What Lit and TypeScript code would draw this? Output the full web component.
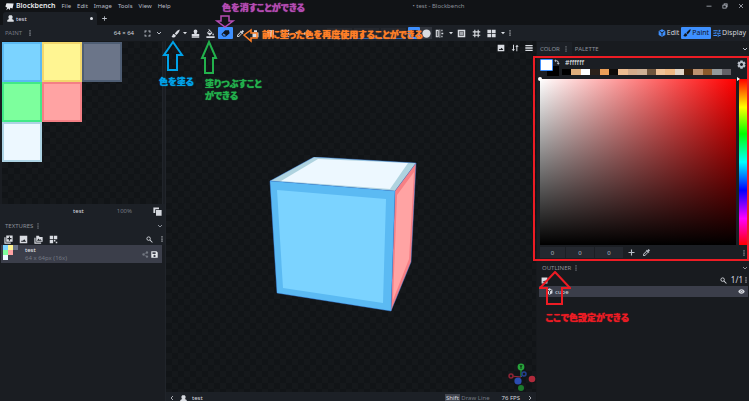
import { LitElement, html, svg, css } from "lit";
import { customElement, property } from "lit/decorators.js";
import { classMap } from "lit/directives/class-map.js";

const ICONS: Record<string, unknown> = {
  logo: svg`<path d="M4 3 23 4 20 17 14 15 13 21 9 17 3 22 6 15 1 12Z"/>`,
  user: svg`<path d="M8 1h8l3 3v7l-3 3H8l-3-3V4zM1 17l6-3h10l6 3v6H1z"/>`,
  plus: svg`<path d="M10.500 4h3v6.500H20v3h-6.500V20h-3v-6.500H4v-3h6.500z"/>`,
  frame: svg`<path d="M2 2h7v3H5v4H2zM15 2h7v7h-3V5h-4zM2 15h3v4h4v3H2zM19 15h3v7h-7v-3h4z"/>`,
  down: svg`<path d="m4 8 8 8 8-8" fill="none" stroke="currentColor" stroke-width="4"/>`,
  left: svg`<path d="m16 4-8 8 8 8" fill="none" stroke="currentColor" stroke-width="3"/>`,
  right: svg`<path d="m8 4 8 8-8 8" fill="none" stroke="currentColor" stroke-width="3"/>`,
  caret: svg`<path d="M4 8h16l-8 9z"/>`,
  dots: svg`<path d="M10 1h4v5h-4zM10 9.500h4v5h-4zM10 18h4v5h-4z"/>`,
  brush: svg`<path d="M23 1c-3 0-10 6-13 11l4 4C19 12 24 4 23 1zM8 13c-5 0-3 6-7 7 3 4 11 3 12-3z"/>`,
  stamp: svg`<path d="M7 6a5 5 0 1 1 10 0c0 3-2 4-2 7h7v6H2v-6h7c0-3-2-4-2-7zM2 20h20v3H2z"/>`,
  bucket: svg`<path d="M16.600 9 7.600 0 6.200 1.400l2.400 2.400-5.200 5.200c-.6.6-.6 1.500 0 2.100l5.500 5.500c.6.6 1.500.6 2.100 0l5.500-5.500c.6-.6.6-1.500 0-2.100zM5.200 10 10 5.200 14.800 10zM19 11.500s-2 2.200-2 3.500a2 2 0 0 0 4 0c0-1.300-2-3.500-2-3.500zM1 19h22v5H1z"/>`,
  eraser: svg`<path d="M11 3h10l2 8-10 9H6l-5-6zm-5 9-2 2 3 4h4l2-2z" fill-rule="evenodd"/>`,
  picker: svg`<path d="m20.700 5.600-2.300-2.300a1 1 0 0 0-1.400 0l-3.100 3.100L12 4.500l-1.500 1.500 1.500 1.400L3 16.300V21h4.800l8.900-9 1.400 1.500 1.500-1.500-2-1.900 3.100-3.100c.4-.4.400-1 0-1.400zM7 19l-2-2 8-8 2 2z"/>`,
  paste: svg`<path d="M4 9h16v13H4zM8 3h8v5H8z"/>`,
  square: svg`<path d="M3 3h18v18H3z"/>`,
  rounded: svg`<path d="M2 2h20v20H2zm4 4v12h12V6z" fill-rule="evenodd"/><path d="M7 7h10v10H7z" opacity=".7"/>`,
  circle: svg`<circle cx="12" cy="12" r="11"/>`,
  dashed: svg`<path d="M2 2h5v3H2zM10 2h5v3h-5zM18 2h4v3h-4zM2 9h3v6H2zM19 9h3v6h-3zM2 19h5v3H2zM10 19h5v3h-5zM18 19h4v3h-4z"/>`,
  move: svg`<path d="m12 1 5 6h-3v3h4V7l5 5-5 5v-3h-4v4h3l-5 5-5-5h3v-4H6v3l-5-5 5-5v3h4V7H7z"/>`,
  mirror: svg`<path d="M2 2h8v20H2zm3 3v14h2V5zM12 1h2v22h-2zM17 2h3v4h-3zM17 10h5v4h-5zM17 18h3v4h-3z" fill-rule="evenodd"/>`,
  hash: svg`<path d="M6 2h3v4h6V2h3v4h4v3h-4v6h4v3h-4v4h-3v-4H9v4H6v-4H2v-3h4V9H2V6h4zm3 7v6h6V9z" fill-rule="evenodd"/>`,
  grid: svg`<path d="M1 2h10v9H1zM13 2h10v9H13zM1 13h10v9H1zM13 13h10v9H13z"/>`,
  image: svg`<path d="M2 2h20v20H2zm3 16h14l-5-7-4 5-2-2z" fill-rule="evenodd"/>`,
  sort: svg`<path d="M6 2h3v14h3l-5 6-5-6h4zM16 22V8h-3l5-6 5 6h-4v14z"/>`,
  menu: svg`<path d="M1 3h22v4H1zM1 10h22v4H1zM1 17h22v4H1z"/>`,
  cubeIcon: svg`<path d="m12 1 10 5v12l-10 5-10-5V6z"/><path d="m5 7 7 4 7-4M12 11v9" fill="none" stroke="#1c2026" stroke-width="3"/>`,
  sliders: svg`<path d="M1 4h13v3H1zM17 2h3v7h-3zM20 4h3v3h-3zM1 11h5v3H1zM7 9h3v7H7zM12 11h11v3H12zM1 18h11v3H1zM14 16h3v7h-3zM18 18h5v3h-5z"/>`,
  layers: svg`<path d="M1 1h15v5H6v10H1zM8 8h15v15H8z"/>`,
  addBox: svg`<path d="M1 6h3v14h14v3H1zM6 1h17v17H6zm7 3v4H9v3h4v4h3v-4h4V8h-4V4z" fill-rule="evenodd"/>`,
  addFolder: svg`<path d="M1 7h3v13h15v3H1zM6 2h7l2 3h8v13H6z"/><path d="m8 15 4-6 3 4 2-2 4 4z" fill="#1c2026"/>`,
  brick: svg`<path d="M2 2h9v9H2zM13 2h9v9h-9zM2 13h9v9H2zM13 13h4v4h-4zM18 18h4v4h-4z"/>`,
  search: svg`<circle cx="9" cy="9" r="6" fill="none" stroke="currentColor" stroke-width="3"/><path d="m13 15 2-2 8 8-2 2z"/>`,
  share: svg`<circle cx="5" cy="12" r="4"/><circle cx="17" cy="5" r="4"/><circle cx="17" cy="19" r="4"/><path d="M5 12 17 5M5 12l12 7" stroke="currentColor" stroke-width="2"/>`,
  save: svg`<path d="M1 1h18l4 4v18H1zm4 3v6h11V4zm7 9a4 4 0 1 0 .1 0z" fill-rule="evenodd"/>`,
  gear: svg`<path d="m9 1h6l1 4 4-1 3 5-3 3 3 3-3 5-4-1-1 4H9l-1-4-4 1-3-5 3-3-3-3 3-5 4 1zm3 7a4 4 0 1 0 .1 0z" fill-rule="evenodd"/>`,
  swap: svg`<path d="M8 1v4c8 0 11 4 11 11h4l-6 7-6-7h4c0-5-2-7-7-7v4L1 7z"/>`,
  eye: svg`<path d="M12 4c6 0 10 5 11 8-1 3-5 8-11 8S2 15 1 12c1-3 5-8 11-8zm0 4a4 4 0 1 0 .1 0z" fill-rule="evenodd"/><circle cx="12" cy="12" r="3"/>`,
  min: svg`<path d="M2 11h20v3H2z"/>`,
  restore: svg`<path d="M7 2h15v15h-4v5H2V7h5zm3 3v2h8v7h1V5zM5 10v9h10v-9z" fill-rule="evenodd"/>`,
  close: svg`<path d="m4 4 16 16M20 4 4 20" stroke="currentColor" stroke-width="3"/>`,
};

@customElement("bb-icon")
class BbIcon extends LitElement {
  static styles = css`
    :host { display: inline-flex; width: 9px; height: 9px; flex: none; }
    svg { width: 100%; height: 100%; fill: currentColor; display: block; }
  `;
  @property() name = "";
  render() {
    return html`<svg viewBox="0 0 24 24" aria-hidden="true">${ICONS[this.name]}</svg>`;
  }
}

const MENUS = ["File", "Edit", "Image", "Tools", "View", "Help"];
const TILES = ["sky", "yellow", "slate", "green", "pink", "", "white"];
const SWATCHES = ["#000", "#dfae7c", "#fff", "#2a211b", "#ec9f58", "#0d0b09", "#eebd91", "#d4ac8b",
  "#cfb195", "#70563d", "#f0c398", "#efb983", "#e2d5c6", "#3b220c", "#bd9370", "#8b5a2b", "#93999b", "#626166"];

@customElement("app-root")
class AppRoot extends LitElement {
  static styles = css`
    * { box-sizing: border-box; }
    :host {
      display: grid; grid-template-rows: 12px 13px 16px minmax(0, 1fr); min-height: 100vh;
      position: relative; overflow: hidden; background: #111316; color: #b9bec7;
      font-family: "Noto Sans", "Noto Sans CJK JP", sans-serif; font-size: 6px; line-height: 8px;
    }
    button, input { font: inherit; color: inherit; background: none; border: 0; padding: 0; margin: 0; }
    button { display: inline-flex; align-items: center; justify-content: center; flex: none; }
    h2 { font: inherit; margin: 0; }
    .grow { flex: 1; }
    .small { width: 7px; height: 7px; }
    .tiny { width: 6px; height: 6px; }
    .muted { color: #747983; }

    .menubar { display: grid; grid-template-columns: 1fr auto 1fr; align-items: center; padding: 0 5px; }
    .menus { display: flex; align-items: center; gap: 6px; }
    .brand { display: flex; align-items: center; gap: 2px; color: #e8eaee; font-size: 7px; font-weight: 600; }
    .wintitle { padding-left: 128px; color: #8b9099; }
    .window { display: flex; justify-content: flex-end; gap: 10px; }

    .tabs { display: flex; align-items: stretch; padding-left: 3px; gap: 4px; }
    .tab { display: flex; align-items: center; gap: 2px; width: 94px; padding: 0 4px; background: #1c2026; border-radius: 3px 3px 0 0; color: #dcdfe4; }
    .dot { width: 3px; height: 3px; border-radius: 2px; background: #dcdfe4; }

    .columns { display: grid; grid-template-columns: 165px minmax(0, 1fr) 213px; }
    .toolbar { background: #1c2026; }
    .bar { display: flex; align-items: center; min-width: 0; }
    .sizebar { padding: 0 3px 0 5px; gap: 5px; }
    .res { color: #d5d8de; }
    .tools { padding-left: 4px; }
    .tool { width: 15px; height: 12px; color: #d9dce2; }
    .tool.drop { width: 7px; }
    .tool.on { background: #3e90ff; color: #10151d; border-radius: 1px; }
    .tool.side { background: #30343c; width: 12px; }
    .tool.box { width: 12px; }
    .sliders { display: flex; gap: 2px; margin: 0 2px 0 5px; }
    .slider { width: 25px; height: 11px; background: #24282f; border-bottom: 1px solid #2c62a8; text-align: center; }
    .modes { justify-content: flex-end; padding-right: 2px; gap: 1px; font-size: 7px; }
    .mode { height: 12px; gap: 1px; padding: 0 1px; color: #d2d5db; }
    .mode bb-icon { color: #3e90ff; width: 8px; height: 8px; }
    .mode.on { background: #3e90ff; color: #10151d; border-radius: 1px; padding: 0 2px; }
    .mode.on bb-icon { color: #10151d; }

    .checker { background: repeating-conic-gradient(#111417 0 25%, #15181b 0 50%) 0 0 / 12px 12px; }
    .side { background: #1a1d22; min-width: 0; display: flex; flex-direction: column; }
    .uv { height: 163px; margin: 0 2px; border-right: 1px solid #20242a; border-top: 1px solid #15181b; display: grid; grid-template-columns: repeat(3, 40px); grid-auto-rows: 40px; align-content: start; }
    .tile { border: 2px solid; }
    .sky { background: #7bd3ff; border-color: #5bbaf3; }
    .yellow { background: #fff592; border-color: #f2d76c; }
    .slate { background: #6b7589; border-color: #4e5d73; }
    .green { background: #7dff9d; border-color: #42e987; }
    .pink { background: #ffa3a3; border-color: #f47f85; }
    .white { background: #edf8ff; border-color: #add3e4; }
    .blank { border: 0; }
    .uvfoot { display: grid; grid-template-columns: 1fr auto 1fr; height: 14px; align-items: center; background: #1c2026; padding: 0 3px 0 1px; color: #d5d8de; }
    .uvfoot .zoom { display: flex; justify-content: flex-end; align-items: center; gap: 21px; padding-left: 33px; }
    .uvname { grid-column: 2; }
    .head { display: flex; align-items: center; height: 15px; padding: 0 2px 0 5px; gap: 2px; color: #8b9099; background: #1c2026; }
    .strip { display: flex; align-items: center; gap: 6px; height: 12px; padding: 0 0 0 4px; background: #1c2026; color: #d9dce2; }
    .tex { display: flex; align-items: center; height: 18px; margin: 0 3px 0 1px; padding: 0 4px 0 2px; background: #3b3e4a; gap: 2px; color: #e8eaee; }
    .thumb { display: grid; grid-template-columns: repeat(3, 5px); grid-auto-rows: 5px; width: 20px; align-self: start; }
    .thumb .tile { border: 0; }
    .texname { display: flex; flex-direction: column; line-height: 8px; }

    .view { position: relative; display: flex; flex-direction: column; border-left: 1px solid #20242a; min-width: 0; }
    .stage { position: relative; flex: 1; }
    .viewtools { display: flex; justify-content: flex-end; gap: 6px; padding: 3px 3px; color: #d9dce2; }
    .viewtools bb-icon { width: 8px; height: 8px; }
    .cube { position: absolute; left: 27%; top: 33%; width: 152px; height: 157px; }
    .gizmo { position: absolute; right: 0; bottom: 0; width: 30px; height: 30px; }
    .status { display: flex; align-items: center; height: 9px; gap: 5px; padding: 3px 3px 0; background: #1c2026; overflow: hidden; color: #d5d8de; }
    .status .who { display: flex; gap: 5px; align-items: center; }
    .key { background: #424650; padding: 0 1px; }
    .fps { margin-left: 7px; margin-right: 2px; }

    .right { background: #181b1f; border-left: 1px solid #16191d; position: relative; }
    .ptabs { display: flex; height: 15px; align-items: center; padding-right: 1px; background: #181b1f; }
    .ptab { height: 13px; padding: 0 3px; gap: 3px; color: #8b9099; background: #1c2026; }
    .ptab.off { background: none; }
    .picker { position: relative; background: #1b1e23; padding: 3px 0 1px 3px; height: 205px; display: flex; flex-direction: column; }
    .callout { position: absolute; top: 0; bottom: 0; left: -4px; right: 0; border: 2px solid #ed1c24; pointer-events: none; }
    .top { display: flex; gap: 3px; height: 20px; }
    .current { position: relative; width: 19px; }
    .back { position: absolute; left: 7px; top: 7px; width: 12px; height: 10px; background: #000; }
    .front { position: absolute; left: 0; top: 0; width: 13px; height: 12px; background: #fff; border: 1px solid #3e90ff; border-radius: 1px; }
    .swap { position: absolute; left: 14px; top: 0; width: 6px; height: 6px; }
    .history { flex: 1; display: flex; flex-direction: column; min-width: 0; gap: 2px; }
    .hex { width: 80px; height: 8px; padding-left: 3px; color: #e8eaee; font-size: 7px; }
    .swatches { display: flex; height: 6px; }
    .swatch { flex: 1; }
    .settings { width: 15px; height: 10px; }
    .area { display: flex; height: 166px; gap: 3px; }
    .field { position: relative; flex: 1; background: linear-gradient(to top, #000, transparent), linear-gradient(to right, #fff, #f00); }
    .knob { position: absolute; left: -2px; top: -2px; width: 4px; height: 4px; border-radius: 2px; background: #fff; }
    .huewrap { position: relative; width: 9px; margin-right: 1px; display: flex; }
    .hue { appearance: none; writing-mode: vertical-lr; width: 9px; height: 100%; background: linear-gradient(#f00, #ff0 17%, #0f0 33%, #0ff 50%, #00f 67%, #f0f 84%, #f00); }
    .hue::-webkit-slider-thumb { appearance: none; width: 9px; height: 1px; background: transparent; }
    .mark { position: absolute; left: -2px; top: -2px; border: 2px solid transparent; border-left: 3px solid #fff; }
    .mark.r { left: auto; right: -2px; border-left: 2px solid transparent; border-right: 3px solid #fff; }
    .values { display: flex; align-items: center; gap: 1px; height: 15px; padding-right: 2px; }
    .num { width: 28px; height: 11px; background: #24282f; text-align: center; color: #aeb8c5; }
    .num:first-child { width: 25px; }
    .values button { width: 14px; }
    .outhead { height: 13px; padding-right: 1px; background: #181b1f; }
    .outtools { height: 12px; gap: 4px; background: #181b1f; }
    .count { font-size: 8px; margin-right: -4px; }
    .node { display: flex; align-items: center; gap: 2px; height: 11px; margin: 0 1px 0 2px; padding: 0 3px 0 7px; background: #3b3e4a; color: #d5d8de; }

    .arrows { position: absolute; left: 0; top: 0; width: 280px; height: 110px; fill: none; stroke-width: 2; pointer-events: none; }
    .redarrow { position: absolute; right: 178px; top: 271px; width: 32px; height: 34px; fill: none; stroke: #ed1c24; stroke-width: 2; pointer-events: none; }
    .note { position: absolute; margin: 0; font: 900 9px/12px "Noto Sans CJK JP", sans-serif; font-feature-settings: "palt"; white-space: nowrap; pointer-events: none; text-shadow: 0 0 1px currentColor; }
    .n-fill { left: 205px; top: 78px; color: #22b14c; }
    .n-paint { left: 159px; top: 76px; color: #00a2e8; }
    .n-erase { left: 222px; top: 2px; color: #b44bb2; }
    .n-pick { left: 262px; top: 29px; color: #ff7f27; }
    .n-color { right: 120px; top: 312px; color: #ed1c24; }
  `;

  private tool(name: string, label: string, cls = "") {
    const kinds = { tool: true, [cls || "plain"]: true };
    return html`<button class=${classMap(kinds)} aria-label=${label}>
      <bb-icon name=${name} class=${classMap({ tiny: cls === "drop" })}></bb-icon></button>`;
  }

  private tiles() {
    return TILES.map((t) => html`<div class=${classMap({ tile: true, [t || "blank"]: true })}></div>`);
  }

  private icon(name: string, label: string, cls = "") {
    return html`<button aria-label=${label}><bb-icon name=${name} class=${cls}></bb-icon></button>`;
  }

  render() {
    return html`
      <header class="menubar">
        <nav class="menus">
          <span class="brand"><bb-icon name="logo"></bb-icon>Blockbench</span>
          ${MENUS.map((m) => html`<button>${m}</button>`)}
        </nav>
        <span class="wintitle">• test - Blockbench</span>
        <div class="window">${this.icon("min", "Minimize", "tiny")}${this.icon("restore", "Restore", "tiny")}${this.icon("close", "Close", "tiny")}</div>
      </header>
      <div class="tabs">
        <div class="tab"><bb-icon name="user" class="small"></bb-icon>test<span class="grow"></span><span class="dot"></span></div>
        ${this.icon("plus", "New tab", "small")}
      </div>
      <div class="toolbar columns">
        <div class="bar sizebar">
          <h2 class="muted">PAINT</h2><bb-icon name="dots" class="tiny"></bb-icon><span class="grow"></span>
          <span class="res">64 × 64</span><span></span>
          ${this.icon("frame", "Fit view", "small")}${this.icon("down", "Collapse", "tiny")}
        </div>
        <div class="bar tools">
          ${this.tool("brush", "Brush", "box")}${this.tool("caret", "Brush options", "drop")}
          ${this.tool("stamp", "Copy brush")}${this.tool("bucket", "Fill")}
          ${this.tool("eraser", "Eraser", "on")}${this.tool("picker", "Color picker")}
          ${this.tool("paste", "Draw shape")}${this.tool("square", "Gradient")}
          ${this.tool("dashed", "Selection")}${this.tool("caret", "Selection options", "drop")}
          ${this.tool("move", "Move layer")}${this.tool("dots", "More", "drop")}
          <div class="sliders">
            ${["Size", "Opacity", "Softness"].map((l) => html`<input class="slider" aria-label=${l} />`)}
          </div>
          <button class="tool on box" aria-label="Square brush"><bb-icon name="square"></bb-icon></button>
          ${this.tool("circle", "Round brush", "side")}
          ${this.tool("mirror", "Mirror painting")}${this.tool("caret", "Mirror options", "drop")}
          ${this.tool("rounded", "Lock alpha")}${this.tool("hash", "Pixel grid")}
          ${this.tool("grid", "Painting grid")}${this.tool("caret", "Grid options", "drop")}
          ${this.tool("dots", "More", "drop")}
        </div>
        <nav class="bar modes">
          <button class="mode"><bb-icon name="cubeIcon"></bb-icon>Edit</button>
          <button class="mode on"><bb-icon name="brush"></bb-icon>Paint</button>
          <button class="mode"><bb-icon name="sliders"></bb-icon>Display</button>
        </nav>
      </div>
      <main class="columns">
        <aside class="side">
          <div class="uv checker">${this.tiles()}</div>
          <div class="uvfoot"><span class="uvname">test</span>
            <span class="zoom"><span class="muted">100%</span>${this.icon("layers", "Overlay")}</span></div>
          <div class="head"><h2>TEXTURES</h2><bb-icon name="dots" class="tiny"></bb-icon><span class="grow"></span>${this.icon("down", "Collapse", "tiny")}</div>
          <div class="strip">
            ${this.icon("addBox", "Create texture")}${this.icon("image", "Import texture")}
            ${this.icon("addFolder", "Add folder")}${this.icon("brick", "Resource pack")}
            <span class="grow"></span>${this.icon("search", "Search", "small")}<bb-icon name="dots" class="tiny"></bb-icon>
          </div>
          <div class="tex">
            <div class="thumb">${this.tiles()}</div>
            <div class="texname"><span>test</span><span class="muted">64 x 64px (16x)</span></div>
            <span class="grow"></span><bb-icon name="share" class="small muted"></bb-icon>${this.icon("save", "Save", "small")}
          </div>
        </aside>
        <section class="view">
          <div class="stage checker">
            <div class="viewtools">${this.icon("image", "Background")}${this.icon("sort", "Swap")}${this.icon("menu", "Menu")}</div>
            <svg class="cube" viewBox="266 157 152 157" role="img" aria-label="Cube">
              <path fill="#afd3df" d="M270 181 314 157 416 163 395 191Z"/>
              <path fill="#edf8ff" d="M281 181 318 159 408 163 390 189Z"/>
              <path fill="#f77f84" d="M395 191 416 163 411 262 391 311Z"/>
              <path fill="#ffa3a3" d="M397 195 414 172 409 259 393 300Z"/>
              <path fill="#5bbaf3" d="M270 181 395 191 391 311 277 293Z"/>
              <path fill="#7bd3ff" d="M277 190 386 199 383 303 283 288Z"/>
              <path fill="none" stroke="#3e90ff" stroke-width=".4" d="M270 181 314 157 416 163 411 262 391 311 277 293ZL395 191 416 163M395 191 391 311"/>
            </svg>
            <svg class="gizmo" viewBox="506 362 30 30" aria-hidden="true">
              <path d="M521 377V367" stroke="#27a33b"/><path d="M521 377 511 376" stroke="#9d2637"/><path d="m521 377 3-3" stroke="#2948a8"/>
              <circle cx="511" cy="376" r="2" fill="#181b1f" stroke="#8e2436" stroke-width="1.500"/>
              <circle cx="524" cy="374" r="2" fill="#181b1f" stroke="#22408f" stroke-width="1.500"/>
              <circle cx="521" cy="367" r="3.400" fill="#27a33b"/><path d="m520 365 1 2 1-2M521 367v2" stroke="#0d3815" fill="none"/>
              <circle cx="532" cy="379" r="3.300" fill="#b02a3b"/>
              <circle cx="518" cy="381" r="3.600" fill="#2b4db0"/>
              <circle cx="521" cy="388" r="3" fill="#1c7a2c"/>
            </svg>
          </div>
          <footer class="status">
            ${this.icon("left", "Previous", "tiny")}
            <span class="who"><bb-icon name="user" class="small"></bb-icon>test</span><span class="grow"></span>
            <span><span class="key">Shift</span> <span class="muted">Draw Line</span></span>
            <span class="fps">76 FPS</span>${this.icon("right", "Next", "tiny")}
          </footer>
        </section>
        <aside class="side right">
          <div class="ptabs"><button class="ptab">COLOR <bb-icon name="dots" class="tiny"></bb-icon></button><button class="ptab off">PALETTE</button>
            <span class="grow"></span>${this.icon("down", "Collapse", "tiny")}</div>
          <div class="picker">
            <div class="top">
              <div class="current"><div class="back"></div><div class="front"></div><bb-icon name="swap" class="swap"></bb-icon></div>
              <div class="history">
                <input class="hex" aria-label="Hex color" value="#ffffff" />
                <div class="swatches">${SWATCHES.map((c) => html`<div class="swatch" style="background:${c}"></div>`)}</div>
              </div>
              <button class="settings" aria-label="Settings"><bb-icon name="gear"></bb-icon></button>
            </div>
            <div class="area">
              <div class="field"><div class="knob"></div></div>
              <div class="huewrap"><input class="hue" type="range" min="0" max="360" value="0" aria-label="Hue" /><span class="mark"></span><span class="mark r"></span></div>
            </div>
            <div class="values">
              ${["Hue value", "Saturation value", "Brightness value"].map((l) => html`<input class="num" aria-label=${l} value="0" />`)}
              ${this.icon("plus", "Add to palette")}${this.icon("picker", "Pick color")}
              <span class="grow"></span><bb-icon name="dots" class="tiny"></bb-icon>
            </div>
            <div class="callout"></div>
          </div>
          <div class="head outhead"><h2>OUTLINER</h2><bb-icon name="dots" class="tiny"></bb-icon><span class="grow"></span>${this.icon("down", "Collapse", "tiny")}</div>
          <div class="strip outtools">${this.icon("image", "Toggle options", "small")}<span class="grow"></span>
            ${this.icon("search", "Search", "small")}<span class="count">1/1</span><bb-icon name="dots" class="tiny"></bb-icon></div>
          <div class="node"><bb-icon name="cubeIcon" class="small"></bb-icon>cube<span class="grow"></span>${this.icon("eye", "Visibility", "small")}</div>
        </aside>
      </main>
      <svg class="arrows" viewBox="0 0 280 110" aria-hidden="true">
        <path stroke="#00a2e8" d="m173 42 9 13h-5v15h-9V55h-4z"/>
        <path stroke="#22b14c" d="m209 42 7 16h-3v15h-8V58h-3z"/>
        <path stroke="#b44bb2" stroke-width="1.500" d="M221 16h8v5h4l-8 6-8-6h4z"/>
        <path stroke="#ff7f27" stroke-width="1.500" d="m244 35 7-5v3h6v5h-6v3z"/>
      </svg>
      <svg class="redarrow" viewBox="539 271 32 34" aria-hidden="true"><path d="m555 272 15 16h-8v16h-15v-16h-7z"/></svg>
      <p class="note n-erase">色を消すことができる</p>
      <p class="note n-pick">前に塗った色を再度使用することができる</p>
      <p class="note n-paint">色を塗る</p>
      <p class="note n-fill">塗りつぶすこと<br />ができる</p>
      <p class="note n-color">ここで色設定ができる</p>
    `;
  }
}
